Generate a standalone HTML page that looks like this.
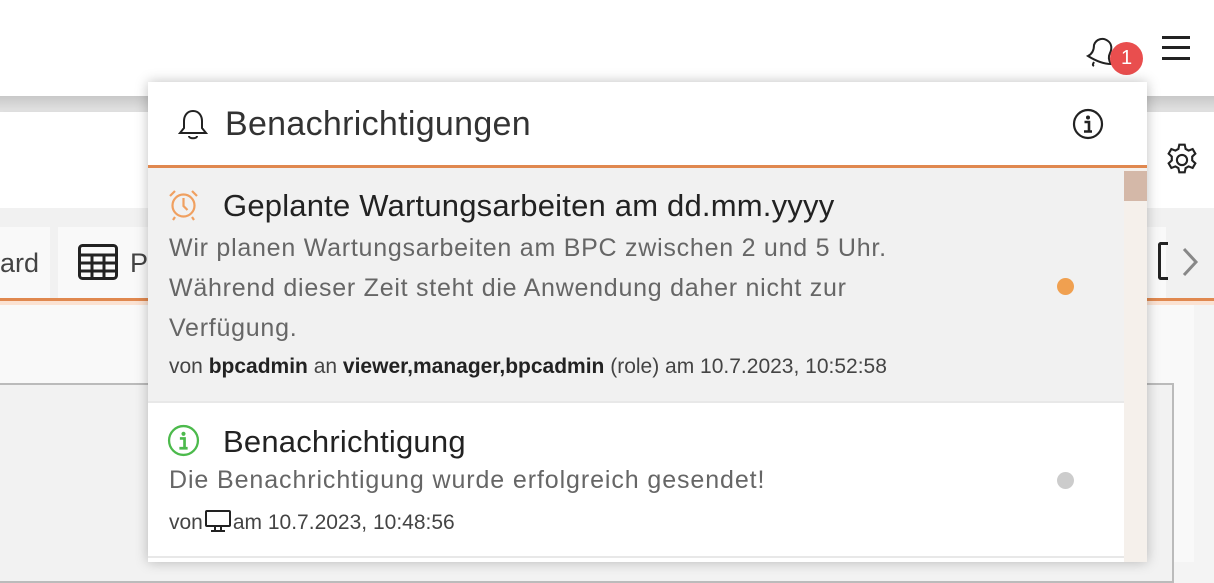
<!DOCTYPE html>
<html><head><meta charset="utf-8"><style>
*{margin:0;padding:0;box-sizing:border-box}
body{width:1214px;height:562px;overflow:hidden;background:#f4f4f4;font-family:"Liberation Sans",sans-serif;position:relative;color:#222}
.a{position:absolute}
</style></head><body>
<div class="a" style="left:0;top:0;width:1214px;height:96px;background:#fff"></div>
<div class="a" style="left:0;top:96px;width:1214px;height:16px;background:linear-gradient(#c8c8c8,#e4e4e4)"></div>
<div class="a" style="left:0;top:112px;width:1214px;height:96px;background:#fff;box-shadow:0 3px 6px rgba(0,0,0,.15)"></div>
<div class="a" style="left:0;top:208px;width:1214px;height:92px;background:#f1f1f1"></div>
<div class="a" style="left:0;top:227px;width:50px;height:71px;background:#f9f9f9"></div>
<div class="a" style="left:58px;top:227px;width:100px;height:71px;background:#f9f9f9"></div>
<div class="a" style="left:1100px;top:227px;width:66px;height:71px;background:#f9f9f9"></div>
<div class="a" style="left:0;top:298px;width:1214px;height:3px;background:#e0884f"></div>
<div class="a" style="left:0;top:301px;width:1214px;height:4px;background:#fbe2d2"></div>
<div class="a" style="left:0;top:305px;width:1194px;height:257px;background:#f9f9f9"></div>
<div class="a" style="left:0;top:383px;width:1174px;height:200px;border:2px solid #bbb;border-left:none;background:#f2f2f2"></div>
<div class="a" style="left:0;top:248px;font-size:27px;color:#444">ard</div>
<svg class="a" style="left:78px;top:244px" width="40" height="36" viewBox="0 0 40 36"><rect x="1.5" y="1.5" width="37" height="33" rx="3" fill="none" stroke="#222" stroke-width="3"/><path d="M1.5 11h37M1.5 19h37M1.5 27h37M14 11v24M26 11v24" stroke="#222" stroke-width="3"/></svg>
<div class="a" style="left:130px;top:248px;font-size:27px;color:#444">P</div>
<div class="a" style="left:1158px;top:242px;width:10px;height:38px;border:3px solid #222;border-right:none;border-radius:3px 0 0 3px"></div>
<svg class="a" style="left:1180px;top:246px" width="20" height="32" viewBox="0 0 20 32"><path d="M4 3l12 13L4 29" fill="none" stroke="#888" stroke-width="3"/></svg>
<svg class="a" style="left:1164px;top:142px" width="36" height="36" viewBox="0 0 24 24" fill="none" stroke="#222" stroke-width="1.4"><circle cx="12" cy="12" r="3.4"/><path d="M10.2 1.8h3.6l.6 2.8 2 1.1 2.7-1 1.8 3.1-2.1 1.9v2.6l2.1 1.9-1.8 3.1-2.7-1-2 1.1-.6 2.8h-3.6l-.6-2.8-2-1.1-2.7 1-1.8-3.1 2.1-1.9V9.7L3.1 7.8l1.8-3.1 2.7 1 2-1.1z"/></svg>
<svg class="a" style="left:1084px;top:36px" width="34" height="32" viewBox="0 0 34 32" fill="none" stroke="#222" stroke-width="2"><path d="M4 20c4-2 6-6 6-11 2-6 9-8 14-4 4 3 4 8 2 12-2 4-1 8 1 11-7 0-15-3-23-8z"/><path d="M10 26c-1 2-2 3 0 4"/></svg>
<div class="a" style="left:1110px;top:42px;width:33px;height:33px;border-radius:50%;background:#e94e4e;color:#fff;font-size:20px;text-align:center;line-height:33px">1</div>
<div class="a" style="left:1162px;top:36px;width:28px;height:3px;background:#222"></div>
<div class="a" style="left:1162px;top:46px;width:28px;height:3px;background:#222"></div>
<div class="a" style="left:1162px;top:57px;width:28px;height:3px;background:#222"></div>

<div class="a" style="left:148px;top:82px;width:999px;height:480px;background:#fff;box-shadow:0 0 12px rgba(0,0,0,.25);overflow:hidden">
 <svg class="a" style="left:29px;top:26px" width="32" height="34" viewBox="0 0 32 34" fill="none" stroke="#222" stroke-width="2"><path d="M16 3c-6 0-9 5-9 10v7l-4 5h26l-4-5v-7c0-5-3-10-9-10z"/><path d="M12 28c0 3 8 3 8 0"/></svg>
 <div class="a" style="left:77px;top:23px;font-size:34px;font-weight:300;color:#333;letter-spacing:.3px">Benachrichtigungen</div>
 <svg class="a" style="left:924px;top:26px" width="32" height="32" viewBox="0 0 32 32"><circle cx="16" cy="16" r="14" fill="none" stroke="#222" stroke-width="2.2"/><circle cx="16" cy="9.5" r="2" fill="#222"/><path d="M12.5 14h4.5v9M12 23.5h8" stroke="#222" stroke-width="2.6" fill="none"/></svg>
 <div class="a" style="left:0;top:83px;width:999px;height:3px;background:#e0884f"></div>
 <div class="a" style="left:0;top:86px;width:976px;height:235px;background:#f1f1f1;border-bottom:2px solid #e8e8e8"></div>
 <svg class="a" style="left:19px;top:106px" width="33" height="33" viewBox="0 0 33 33" fill="none" stroke="#f0a060" stroke-width="2.2"><circle cx="16.5" cy="17.5" r="11"/><path d="M16.5 10v8l4 4M3 8l5-5M30 8l-5-5M8 29l-2 3M25 29l2 3"/></svg>
 <div class="a" style="left:75px;top:106px;font-size:31px;color:#222;letter-spacing:.2px;white-space:nowrap">Geplante Wartungsarbeiten am dd.mm.yyyy</div>
 <div class="a" style="left:21px;top:146px;font-size:25px;color:#666;line-height:40px;white-space:nowrap;letter-spacing:.75px">Wir planen Wartungsarbeiten am BPC zwischen 2 und 5 Uhr.<br>Während dieser Zeit steht die Anwendung daher nicht zur<br>Verfügung.</div>
 <div class="a" style="left:21px;top:273px;font-size:21px;color:#444;white-space:nowrap;width:756px;overflow:hidden">von <b style="color:#222">bpcadmin</b> an <b style="color:#222">viewer,manager,bpcadmin</b> (role) am 10.7.2023, 10:52:58</div>
 <div class="a" style="left:909px;top:196px;width:17px;height:17px;border-radius:50%;background:#f0a050"></div>
 <svg class="a" style="left:19px;top:342px" width="33" height="33" viewBox="0 0 32 32"><circle cx="16" cy="16" r="14" fill="none" stroke="#4cba4c" stroke-width="2.2"/><circle cx="16" cy="9.5" r="2" fill="#4cba4c"/><path d="M12.5 14h4.5v9M12 23.5h8" stroke="#4cba4c" stroke-width="2.6" fill="none"/></svg>
 <div class="a" style="left:75px;top:342px;font-size:31px;color:#222;letter-spacing:.2px">Benachrichtigung</div>
 <div class="a" style="left:21px;top:384px;font-size:25px;color:#666;letter-spacing:.9px">Die Benachrichtigung wurde erfolgreich gesendet!</div>
 <div class="a" style="left:21px;top:427px;font-size:21px;color:#444">von<svg width="30" height="24" viewBox="0 0 28 24" style="vertical-align:-4px" fill="none" stroke="#222" stroke-width="2"><rect x="2" y="2" width="24" height="15" rx="1"/><path d="M11 17v4M17 17v4M7 22h14"/></svg>am 10.7.2023, 10:48:56</div>
 <div class="a" style="left:909px;top:390px;width:17px;height:17px;border-radius:50%;background:#ccc"></div>
 <div class="a" style="left:0;top:474px;width:976px;height:2px;background:#e8e8e8"></div>
 <div class="a" style="left:976px;top:86px;width:23px;height:394px;background:#f5f0eb"></div>
 <div class="a" style="left:976px;top:89px;width:23px;height:30px;background:#d4b8a8"></div>
</div>
</body></html>
